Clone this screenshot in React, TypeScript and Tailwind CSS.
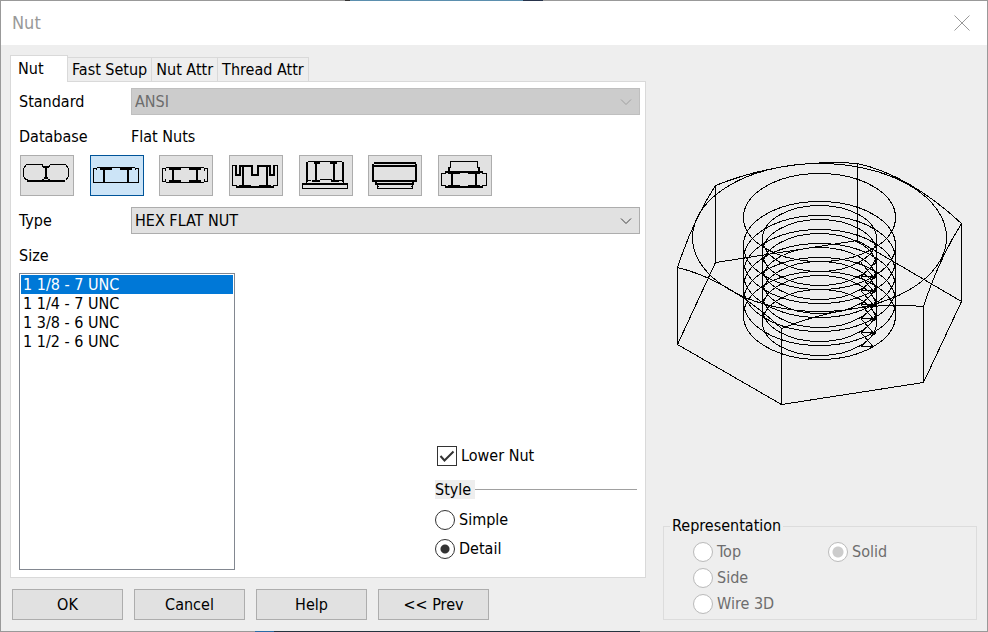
import React, { useState } from 'react'

const TABS = ['Nut', 'Fast Setup', 'Nut Attr', 'Thread Attr']
const SIZES = ['1 1/8 - 7 UNC', '1 1/4 - 7 UNC', '1 3/8 - 6 UNC', '1 1/2 - 6 UNC']
const ACTIONS = ['OK', 'Cancel', 'Help', '<< Prev']

// thin = 1px strokes, thick = 2px strokes
const NUT_ICONS = [
  {
    name: 'Double chamfer nut',
    thin: 'M6 9.5H23M30 9.5H46M5.5 10V12M4.5 11V13M3.5 13V22M4.5 22V24M5.5 23V25M6 24.5H8M46.5 10V12M47.5 11V13M48.5 13V22M47.5 22V24M46.5 23V25M22.5 10V12M29.5 10V12M22 24.5H24M28 24.5H30',
    thick: 'M7 26H45M23 12H29M26 12V24M24 23H28',
  },
  {
    name: 'Flat nut',
    thin: 'M7 12.5H45M3 13.5H7M45 13.5H49M3.5 13V28M48.5 13V28M3 27.5H49M6.5 13V15M45.5 13V15',
    thick: 'M10 14H22M30 14H42M14 14V27M38 14V27',
  },
  {
    name: 'Reversible nut',
    thin: 'M7 12.5H45M7 27.5H45M3 13.5H7M45 13.5H49M3.5 13V27M48.5 13V27M3 26.5H7M45 26.5H49M6.5 13V16M45.5 13V16M6.5 24V27M45.5 24V27',
    thick: 'M10 14H22M30 14H42M10 26H22M30 26H42M14 14V26M38 14V26',
  },
  {
    name: 'Castle nut',
    thin: 'M3 10.5H7M3.5 10V31M45 10.5H49M48.5 10V31M3 30.5H8M44 30.5H49M10 30.5H22M30 30.5H42',
    thick: 'M7 10V20H11V11H23V20H29V11H41V20H45V10M14 11V31M38 11V31M7 32H45',
  },
  {
    name: 'Flange nut',
    thin: 'M9 6.5H43M3.5 28V33.5H48.5V28M21 24.5H33M8 25.5H12M40 25.5H44M7.5 26V28M44.5 26V28',
    thick: 'M8 7V27M44 7V27M17 7V26M35 7V26M15 8H21M31 8H38M13 26H21M32 26H40M3 29H49',
  },
  {
    name: 'Round nut',
    thin: 'M9.5 30V33.5H44.5V30M9 31.5H11M43 31.5H45',
    thick: 'M6 8H48M4 11H49M5 9V27M48 9V27M4 26H49M7 29H46M8 27V29M45 27V29',
  },
  {
    name: 'Collar nut',
    thin: 'M12.5 13V6.5H39.5V13M3 18.5H8M44 18.5H49M3.5 18V31M48.5 18V31M3 30.5H8M44 30.5H49M10 18.5H22M30 18.5H42M10 30.5H22M30 30.5H42',
    thick: 'M11 12V17M41 12V17M7 17H45M14 18V31M38 18V31M7 32H45',
  },
]

const MAJOR_RINGS = [90, 104, 118, 132, 146, 160]
const MINOR_RINGS = [83, 97, 111, 125, 139, 153, 167]
const THREAD_ENDS = [107, 121, 135, 149, 163, 177]

function NutPreview() {
  return (
    <svg viewBox="0 0 314 255" className="w-full" fill="none" stroke="#000" shapeRendering="crispEdges" role="img" aria-label="Nut preview">
      {/* chamfered top face */}
      <path d="M52.5 30.5Q122 3 194.5 8.5Q246 20 298.5 68.5Q276 104 260.5 151.5Q190 145 118.5 173.5Q66 125 14.5 112.5Q30 65 52.5 30.5" />
      <ellipse cx="156.5" cy="82.5" rx="127" ry="74" />
      {/* bottom face and vertical edges */}
      <path d="M52.5 107.5L194.5 85.5L298.5 146.5L260.5 227.5L118.5 249.5L14.5 189.5Z" />
      <path d="M52.5 30.5V107.5M194.5 8.5V85.5M298.5 68.5V146.5M260.5 151.5V227.5M118.5 173.5V249.5M14.5 112.5V189.5" />
      {/* bore and thread */}
      <ellipse cx="156.5" cy="62.5" rx="76" ry="44" />
      {MAJOR_RINGS.map((cy) => (
        <ellipse key={cy} cx="156.5" cy={cy + 0.5} rx="76" ry="44" />
      ))}
      {MINOR_RINGS.map((cy) => (
        <ellipse key={cy} cx="156.5" cy={cy + 0.5} rx="57" ry="33" />
      ))}
      <path d="M80.5 90V160M232.5 90V160M99.5 83V167M213.5 83V167" />
      {THREAD_ENDS.map((y) => (
        <path key={y} d={`M198 ${y + 14.5}H210L198 ${y + 0.5}M198 ${y + 14.5}L213 ${y + 0.5}`} />
      ))}
    </svg>
  )
}

function Dropdown({ id, value, disabled }: { id: string; value: string; disabled?: boolean }) {
  return (
    <div className="grid flex-1 items-center">
      <select
        id={id}
        disabled={disabled}
        className="col-start-1 row-start-1 h-[27px] w-full appearance-none border border-[#adadad] bg-[#e1e1e1] px-[3px] pt-px disabled:border-[#bfbfbf] disabled:bg-[#cccccc] disabled:text-[#6d6d6d] disabled:opacity-100"
      >
        <option>{value}</option>
      </select>
      <svg
        viewBox="0 0 12 8"
        className={`pointer-events-none col-start-1 row-start-1 mr-2 h-2 w-3 justify-self-end ${disabled ? 'text-[#a0a0a0]' : 'text-[#404040]'}`}
        fill="none"
        stroke="currentColor"
      >
        <path d="M1 1.5L6 6.5L11 1.5" />
      </svg>
    </div>
  )
}

type RadioProps = {
  name: string
  label: string
  checked?: boolean
  disabled?: boolean
  onChange?: () => void
}

function Radio({ name, label, checked = false, disabled, onChange }: RadioProps) {
  return (
    <label className={`flex items-center gap-1 ${disabled ? 'text-[#6d6d6d]' : ''}`}>
      <input
        type="radio"
        name={name}
        checked={checked}
        disabled={disabled}
        onChange={onChange}
        className="size-5 shrink-0 appearance-none rounded-full border border-[#333] bg-white bg-clip-padding checked:bg-[radial-gradient(circle,#333_4px,#fff_5px)] disabled:border-[#bcbcbc] disabled:checked:bg-[radial-gradient(circle,#ccc_5px,#fff_6px)]"
      />
      {label}
    </label>
  )
}

export default function App() {
  const [nut, setNut] = useState(1)
  const [style, setStyle] = useState('Detail')
  const [lower, setLower] = useState(true)

  return (
    <div className="flex min-h-screen flex-col border-x border-[#999] bg-[#eee] font-['DejaVu_Sans_Condensed','Noto_Sans',sans-serif] text-base leading-5 text-black">
      {/* the desktop shows through parts of the window edge */}
      <div className="h-px bg-[linear-gradient(90deg,#999_344px,#333_344px_349px,#5b8fae_349px_522px,#26324a_522px_542px,#999_542px)]" />
      <header className="flex h-11 items-center justify-between bg-white pr-[17px] pl-[11px]">
        <h1 className="text-lg text-[#999]">Nut</h1>
        <button aria-label="Close" className="text-[#999]">
          <svg viewBox="0 0 16 16" className="size-4" fill="none" stroke="currentColor">
            <path d="M0.5 0.5L15.5 15.5M15.5 0.5L0.5 15.5" />
          </svg>
        </button>
      </header>

      <main className="flex flex-1 gap-[17px] pt-2.5 pr-2.5 pb-[11px] pl-[9px]">
        <div className="flex min-w-0 flex-1 flex-col">
          <div role="tablist" className="flex items-end">
            {TABS.map((tab, i) => (
              <button
                key={tab}
                role="tab"
                aria-selected={i === 0}
                className={
                  i === 0
                    ? 'z-10 -mb-px h-[27px] w-[58px] border border-b-0 border-[#d9d9d9] bg-white pl-[7px] text-left'
                    : 'h-6 border-t border-r border-[#d9d9d9] px-1 pt-px whitespace-nowrap'
                }
              >
                {tab}
              </button>
            ))}
          </div>

          <section className="flex flex-1 flex-col border border-[#d9d9d9] bg-white pt-1.5 pr-[5px] pb-[7px] pl-2">
            <div className="flex items-center">
              <label htmlFor="standard" className="w-28 pt-px">Standard</label>
              <Dropdown id="standard" value="ANSI" disabled />
            </div>
            <div className="mt-3 flex">
              <span className="w-28">Database</span>
              <span>Flat Nuts</span>
            </div>
            <div className="mt-2 ml-px flex w-[472px] justify-between">
              {NUT_ICONS.map((icon, i) => (
                <button
                  key={icon.name}
                  aria-label={icon.name}
                  aria-pressed={i === nut}
                  onClick={() => setNut(i)}
                  className={`border ${i === nut ? 'border-[#005499] bg-[#cce4f7]' : 'border-[#adadad] bg-[#e1e1e1]'}`}
                >
                  <svg viewBox="1 1 52 39" className="h-[39px] w-[52px]" fill="none" stroke="#000" shapeRendering="crispEdges">
                    <path d={icon.thin} />
                    <path d={icon.thick} strokeWidth="2" />
                  </svg>
                </button>
              ))}
            </div>
            <div className="mt-[11px] flex items-center">
              <label htmlFor="type" className="w-28 pt-px">Type</label>
              <Dropdown id="type" value="HEX FLAT NUT" />
            </div>
            <label htmlFor="size" className="mt-3">Size</label>

            <div className="mt-[7px] flex flex-1 justify-between">
              <select
                id="size"
                size={4}
                defaultValue={SIZES[0]}
                className="w-[216px] appearance-none overflow-hidden border border-[#828790] bg-white p-px"
              >
                {SIZES.map((s) => (
                  <option
                    key={s}
                    className="h-[19px] min-h-0 px-0.5 py-0 leading-[19px] checked:bg-[linear-gradient(#0078d7,#0078d7)] checked:[-webkit-text-fill-color:#fff]"
                  >
                    {s}
                  </option>
                ))}
              </select>

              <div className="mr-[3px] flex w-[202px] flex-col self-end pb-[11px]">
                <label className="ml-0.5 flex items-center gap-1">
                  <span className="grid">
                    <input
                      type="checkbox"
                      checked={lower}
                      onChange={() => setLower(!lower)}
                      className="peer col-start-1 row-start-1 size-5 appearance-none border border-[#333] bg-white"
                    />
                    <svg
                      viewBox="0 0 20 20"
                      className="pointer-events-none invisible col-start-1 row-start-1 size-5 peer-checked:visible"
                      fill="none"
                      stroke="#333"
                      strokeWidth="2"
                    >
                      <path d="M3.5 10L7.5 14.5L16.5 5.5" />
                    </svg>
                  </span>
                  Lower Nut
                </label>
                <div className="mt-3.5 flex items-center">
                  <span className="w-10 bg-[#eee] leading-[19px]">Style</span>
                  <span className="flex-1 border-t border-[#a0a0a0]" />
                </div>
                <div className="mt-[11px] flex flex-col gap-[9px]">
                  {['Simple', 'Detail'].map((s) => (
                    <Radio key={s} name="style" label={s} checked={style === s} onChange={() => setStyle(s)} />
                  ))}
                </div>
              </div>
            </div>
          </section>

          <div className="mt-[11px] ml-0.5 flex gap-[11px]">
            {ACTIONS.map((action) => (
              <button key={action} className="h-[31px] w-[111px] border border-[#adadad] bg-[#e1e1e1] pt-px">
                {action}
              </button>
            ))}
          </div>
        </div>

        <aside className="flex w-[314px] shrink-0 flex-col justify-between pt-[100px]">
          <NutPreview />
          <fieldset className="border border-[#dcdcdc] px-[29px] pt-1.5 pb-[5px]">
            <legend className="-ml-[23px] px-0.5">Representation</legend>
            <div className="grid grid-cols-[135px_1fr] gap-y-1.5">
              <Radio name="representation" label="Top" disabled />
              <Radio name="representation" label="Solid" checked disabled />
              <Radio name="representation" label="Side" disabled />
              <span />
              <Radio name="representation" label="Wire 3D" disabled />
            </div>
          </fieldset>
        </aside>
      </main>
      <div className="h-px bg-[linear-gradient(90deg,#999_254px,#2a6aa5_254px_273px,#25333f_273px_639px,#999_639px)]" />
    </div>
  )
}
